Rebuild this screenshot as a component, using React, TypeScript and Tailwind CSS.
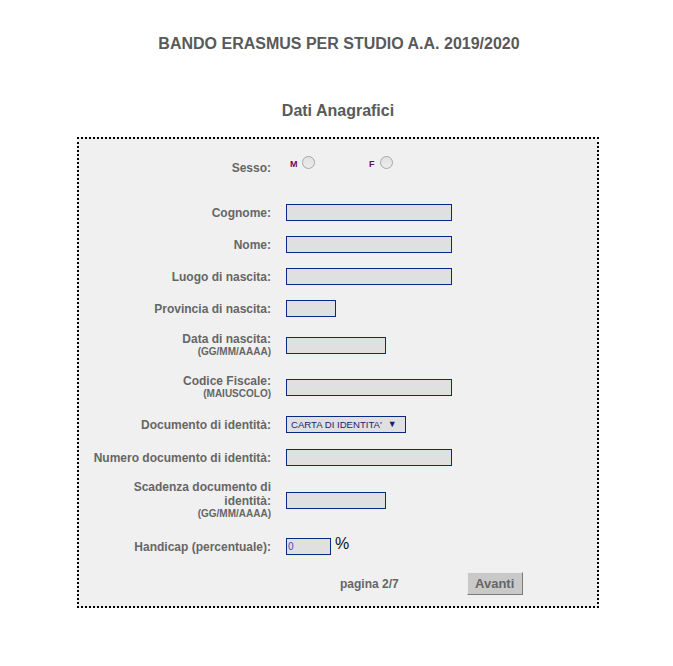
import React from "react";

const font = "font-['Liberation_Sans',Arial,Helvetica,sans-serif]";

function Label({ children }: { children: React.ReactNode }) {
  return (
    <div className="ml-[12px] w-[180px] shrink-0 text-right text-[12px] font-bold leading-[14px] text-[#666]">
      {children}
    </div>
  );
}

function Sub({ children }: { children: React.ReactNode }) {
  return <div className="text-[10px] leading-[12px]">{children}</div>;
}

function Field({ w }: { w: string }) {
  return (
    <input
      readOnly
      className={`block h-[17px] ${w} border border-[#062a80] bg-[#e0e0e0] p-0 outline-none`}
    />
  );
}

function Radio() {
  return (
    <span className="block h-[13px] w-[13px] rounded-full border border-[#a6a6a6] bg-gradient-to-b from-[#e2e2e2] to-[#ececec]" />
  );
}

export default function App() {
  return (
    <div className={`min-h-[666px] bg-white ${font}`}>
      <div className="pl-[5px] pt-[34px] text-center text-[16px] font-bold leading-[20px] text-[#595959]">
        BANDO ERASMUS PER STUDIO A.A. 2019/2020
      </div>
      <div className="mt-[47px] pl-[3px] text-center text-[16px] font-bold leading-[20px] text-[#595959]">
        Dati Anagrafici
      </div>
      <div className="ml-[77px] mt-[16px] w-[522px] border-2 border-dotted border-black bg-[#f0f0f0] pb-[11px] pt-[16px]">
        {/* Sesso */}
        <div className="flex h-[26px] items-center">
          <Label>Sesso:</Label>
          <div className="ml-[15px] mt-[1px] flex self-start">
            <div className="flex w-[83px] items-end pl-[4px]">
              <span className="text-[9px] font-bold leading-none text-[#6b0a5a]">M</span>
              <span className="ml-[4px]">
                <Radio />
              </span>
            </div>
            <div className="flex items-end">
              <span className="text-[9px] font-bold leading-none text-[#6b0a5a]">F</span>
              <span className="ml-[5px]">
                <Radio />
              </span>
            </div>
          </div>
        </div>

        <div className="mt-[23px] flex h-[17px] items-center">
          <Label>Cognome:</Label>
          <div className="ml-[15px]">
            <Field w="w-[166px]" />
          </div>
        </div>
        <div className="mt-[15px] flex h-[17px] items-center">
          <Label>Nome:</Label>
          <div className="ml-[15px]">
            <Field w="w-[166px]" />
          </div>
        </div>
        <div className="mt-[15px] flex h-[17px] items-center">
          <Label>Luogo di nascita:</Label>
          <div className="ml-[15px]">
            <Field w="w-[166px]" />
          </div>
        </div>
        <div className="mt-[15px] flex h-[17px] items-center">
          <Label>Provincia di nascita:</Label>
          <div className="ml-[15px]">
            <Field w="w-[50px]" />
          </div>
        </div>
        <div className="mt-[15px] flex h-[26px] items-center">
          <Label>
            <div>Data di nascita:</div>
            <Sub>(GG/MM/AAAA)</Sub>
          </Label>
          <div className="ml-[15px]">
            <Field w="w-[100px]" />
          </div>
        </div>
        <div className="mt-[16px] flex h-[26px] items-center">
          <Label>
            <div>Codice Fiscale:</div>
            <Sub>(MAIUSCOLO)</Sub>
          </Label>
          <div className="ml-[15px]">
            <Field w="w-[166px]" />
          </div>
        </div>
        <div className="mt-[16px] flex h-[17px] items-center">
          <Label>Documento di identità:</Label>
          <div className="ml-[15px]">
            <div className="flex h-[17px] w-[120px] items-center border border-[#062a80] bg-[#e0e0e0] pl-[4px] text-[9.6px] leading-none text-[#1c1c6e]">
              <span>CARTA DI IDENTITA'</span>
              <span className="ml-[6px] text-[9px]">▼</span>
            </div>
          </div>
        </div>
        <div className="mt-[16px] flex h-[17px] items-center">
          <Label>Numero documento di identità:</Label>
          <div className="ml-[15px]">
            <Field w="w-[166px]" />
          </div>
        </div>
        <div className="mt-[14px] flex h-[40px] items-center">
          <Label>
            <div>Scadenza documento di identità:</div>
            <Sub>(GG/MM/AAAA)</Sub>
          </Label>
          <div className="ml-[15px]">
            <Field w="w-[100px]" />
          </div>
        </div>
        <div className="mt-[18px] flex h-[17px] items-center">
          <Label>Handicap (percentuale):</Label>
          <div className="ml-[15px] flex items-start self-start">
            <input
              readOnly
              value="0"
              className="block h-[17px] w-[45px] border border-[#062a80] bg-[#e0e0e0] p-0 pl-[1px] text-[10px] text-[#2456b8] outline-none"
            />
            <span className="-mt-[2px] ml-[4px] text-[16px] leading-none text-[#111]">%</span>
          </div>
        </div>
        <div className="mt-[17px] flex h-[23px] items-center">
          <div className="ml-[261px] text-[12px] font-bold leading-[14px] text-[#666]">pagina 2/7</div>
          <button className="ml-[68px] flex h-[23px] w-[56px] items-center justify-center border border-b-[#7a7a7a] border-l-[#ececec] border-r-[#7a7a7a] border-t-[#ececec] bg-[#c9c9c9] text-[13px] font-bold leading-none text-[#666]">
            Avanti
          </button>
        </div>
      </div>
    </div>
  );
}
